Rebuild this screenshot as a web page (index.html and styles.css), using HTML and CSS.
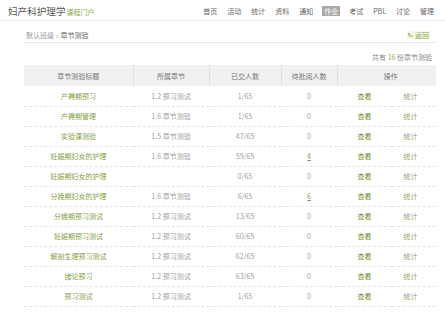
FILE: index.html
```html
<!DOCTYPE html>
<html lang="zh">
<head>
<meta charset="utf-8">
<title>章节测验</title>
<link rel="stylesheet" href="styles.css">
</head>
<body>
<header class="topbar">
  <div class="brand"><span class="course">妇产科护理学</span><span class="portal">课程门户</span></div>
  <nav class="nav">
    <a>首页</a><a>活动</a><a>统计</a><a>资料</a><a>通知</a><a class="active">作业</a><a>考试</a><a>PBL</a><a>讨论</a><a>管理</a>
  </nav>
</header>
<main class="content">
  <div class="crumbs">
    <div class="path">默认班级 <span class="sep">»</span> <b>章节测验</b></div>
    <a class="back"><svg width="6" height="6" viewBox="0 0 6 6"><path d="M1 1v3h4M1 1l-0.8 1.2M1 1l0.8 1.2" fill="none" stroke="#8aa64a" stroke-width="0.9"/></svg>返回</a>
  </div>
  <div class="total">共有 <span class="num">16</span> 份章节测验</div>
  <table class="grid">
    <colgroup>
      <col class="w1"><col class="w2"><col class="w3"><col class="w4"><col class="w5"><col class="w6">
    </colgroup>
    <thead>
      <tr><th>章节测验标题</th><th>所属章节</th><th>已交人数</th><th>待批阅人数</th><th class="ops" colspan="2">操作</th></tr>
    </thead>
    <tbody>
      <tr><td class="title">产褥期预习</td><td>1.2 预习测试</td><td>1/65</td><td>0</td><td class="view">查看</td><td class="stat">统计</td></tr>
      <tr><td class="title">产褥期管理</td><td>1.6 章节测验</td><td>1/65</td><td>0</td><td class="view">查看</td><td class="stat">统计</td></tr>
      <tr><td class="title">实验课测验</td><td>1.5 章节测验</td><td>47/65</td><td>0</td><td class="view">查看</td><td class="stat">统计</td></tr>
      <tr><td class="title">妊娠期妇女的护理</td><td>1.6 章节测验</td><td>59/65</td><td><u class="pend">4</u></td><td class="view">查看</td><td class="stat">统计</td></tr>
      <tr><td class="title">妊娠期妇女的护理</td><td></td><td>0/65</td><td>0</td><td class="view">查看</td><td class="stat">统计</td></tr>
      <tr><td class="title">分娩期妇女的护理</td><td>1.6 章节测验</td><td>6/65</td><td><u class="pend">6</u></td><td class="view">查看</td><td class="stat">统计</td></tr>
      <tr><td class="title">分娩期预习测试</td><td>1.2 预习测试</td><td>13/65</td><td>0</td><td class="view">查看</td><td class="stat">统计</td></tr>
      <tr><td class="title">妊娠期预习测试</td><td>1.2 预习测试</td><td>60/65</td><td>0</td><td class="view">查看</td><td class="stat">统计</td></tr>
      <tr><td class="title">解剖生理预习测试</td><td>1.2 预习测试</td><td>62/65</td><td>0</td><td class="view">查看</td><td class="stat">统计</td></tr>
      <tr><td class="title">绪论预习</td><td>1.2 预习测试</td><td>63/65</td><td>0</td><td class="view">查看</td><td class="stat">统计</td></tr>
      <tr><td class="title">预习测试</td><td>1.2 预习测试</td><td>1/65</td><td>0</td><td class="view">查看</td><td class="stat">统计</td></tr>
    </tbody>
  </table>
</main>
</body>
</html>
```
FILE: styles.css
```css
* { box-sizing: border-box; }
html, body { margin: 0; padding: 0; background: #fff; }
body {
  font-family: "Noto Sans CJK SC", "Noto Sans", sans-serif;
  font-size: 7px;
  color: #999;
  width: 445px;
  height: 314px;
  overflow: hidden;
}
.topbar {
  height: 21px;
  padding: 1px 10px 0 8px;
  display: flex;
  align-items: center;
  justify-content: space-between;
  border-bottom: 1px solid #ececec;
}
.brand { display: flex; align-items: flex-end; }
.course { font-size: 9.6px; color: #555; line-height: 12px; }
.portal { font-size: 7px; color: #8aad3f; line-height: 9px; margin-left: 1px; }
.nav { display: flex; gap: 8px; align-items: center; }
.nav a { color: #666; line-height: 10px; padding: 0 1px; }
.nav a.active { background: #a9a9a9; color: #fff; padding: 0 2px; }
.content { margin: 0 9px 0 24px; }
.crumbs {
  display: flex;
  justify-content: space-between;
  align-items: center;
  padding: 10px 6px 3px 2px;
  line-height: 8px;
  border-bottom: 1px solid #e6e6e6;
}
.path { color: #999; }
.path b { font-weight: normal; color: #666; }
.sep { color: #bbb; }
.back { color: #8aa64a; display: flex; align-items: center; gap: 1px; background: #f6f9e8; padding: 0 1px; }
.total {
  text-align: right;
  padding-right: 4px;
  margin-top: 10px;
  line-height: 8px;
  margin-bottom: 4px;
  color: #888;
}
.total .num { color: #8aad3f; }
.grid {
  width: 412px;
  border-collapse: collapse;
  table-layout: fixed;
}
.w1 { width: 109px; }
.w2 { width: 76px; }
.w3 { width: 72px; }
.w4 { width: 56px; }
.w5 { width: 55px; }
.w6 { width: 44px; }
.grid th {
  height: 21px;
  background: #f1f1f1;
  color: #777;
  font-weight: normal;
  border-left: 1px solid #e0e0e0;
  text-align: center;
  padding: 0;
}
.grid th:first-child { border-left: none; }
.grid th.ops { padding-left: 8px; }
.grid td {
  height: 20px;
  text-align: center;
  padding: 0;
  border-bottom: 1px dashed #e4e4e4;
  color: #a0a0a0;
}
.grid td.title { color: #86a23f; }
.grid td.view { color: #6f8f2a; }
.grid td.stat { color: #93a56b; padding-right: 7px; }
.pend { color: #8a9a6a; }
```
